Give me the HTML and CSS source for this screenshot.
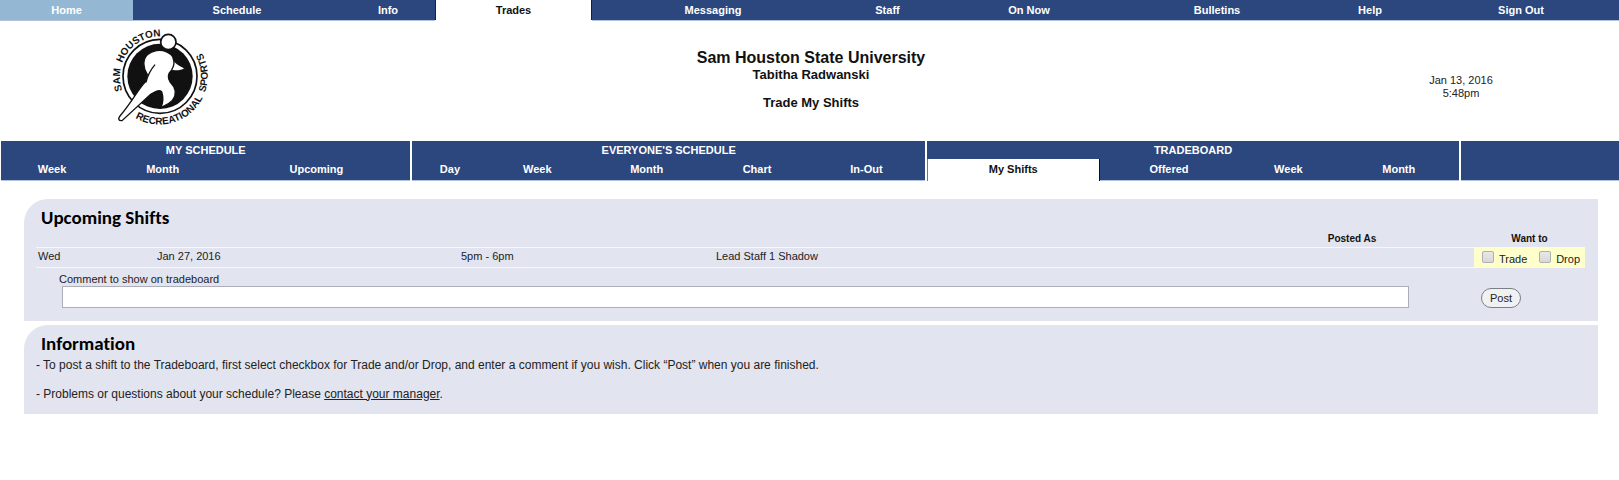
FILE: index.html
```html
<!DOCTYPE html>
<html lang="en">
<head>
<meta charset="utf-8">
<title>Trade My Shifts</title>
<link rel="stylesheet" href="styles.css">
</head>
<body>
<nav class="main-nav" aria-label="Main">
  <a class="home" href="#">Home</a>
  <a href="#">Schedule</a>
  <a href="#">Info</a>
  <a class="current" href="#" aria-current="page">Trades</a>
  <a href="#">Messaging</a>
  <a href="#">Staff</a>
  <a href="#">On Now</a>
  <a href="#">Bulletins</a>
  <a href="#">Help</a>
  <a href="#">Sign Out</a>
</nav>

<header class="banner">
  <svg class="logo" viewBox="0 0 345 330" role="img" aria-label="Sam Houston Recreational Sports">
    <defs>
      <path id="arc-top" d="M55 208A120 120 0 0 1 200 51"/>
      <path id="arc-bottom" d="M94 291A145 145 0 0 0 279 74"/>
    </defs>
    <circle cx="168" cy="166" r="111" fill="#fff" stroke="#111" stroke-width="5"/>
    <circle cx="168" cy="166" r="98" fill="#111"/>
    <path d="M130 161C116 140 116 115 130 101C145 88 170 84 186 92C198 97 207 104 208 114C215 130 233 136 245 142C235 151 214 152 203 147C192 158 190 171 199 184C217 202 218 222 205 238C194 250 187 252 171 259C178 243 178 227 173 212C165 205 153 212 140 220L54 299C43 300 42 293 48 285C87 240 105 200 124 183Z" fill="#fff" stroke="#111" stroke-width="4"/>
    <path d="M153 131C140 146 131 164 126 184" fill="none" stroke="#111" stroke-width="4"/>
    <path d="M203 146C210 135 213 126 208 113" fill="none" stroke="#111" stroke-width="4"/>
    <circle cx="193" cy="63" r="23" fill="#fff" stroke="#111" stroke-width="5"/>
    <text class="logo-text"><textPath href="#arc-top">SAM&#160;&#160;HOUSTON</textPath></text>
    <text class="logo-text"><textPath href="#arc-bottom">RECREATIONAL&#160;&#160;SPORTS</textPath></text>
  </svg>
  <div class="titles">
    <h1>Sam Houston State University</h1>
    <p class="person">Tabitha Radwanski</p>
    <h2>Trade My Shifts</h2>
  </div>
  <p class="clock">Jan 13, 2016<br>5:48pm</p>
</header>

<nav class="sub-nav" aria-label="Shifts">
  <section class="group">
    <h3>MY SCHEDULE</h3>
    <div class="links mine">
      <a href="#">Week</a><a href="#">Month</a><a href="#">Upcoming</a>
    </div>
  </section>
  <section class="group">
    <h3>EVERYONE'S SCHEDULE</h3>
    <div class="links everyone">
      <a href="#">Day</a><a href="#">Week</a><a href="#">Month</a><a href="#">Chart</a><a href="#">In-Out</a>
    </div>
  </section>
  <section class="group">
    <h3>TRADEBOARD</h3>
    <div class="links board">
      <a class="current" href="#" aria-current="page">My Shifts</a><a href="#">Offered</a><a href="#">Week</a><a href="#">Month</a>
    </div>
  </section>
  <div class="group"></div>
</nav>

<main>
  <section class="panel shifts">
    <h2>Upcoming Shifts</h2>
    <form>
      <table>
        <colgroup>
          <col class="col-day"><col class="col-date"><col class="col-time"><col class="col-role"><col class="col-posted"><col class="col-want">
        </colgroup>
        <thead>
          <tr><td></td><td></td><td></td><td></td><th scope="col">Posted As</th><th scope="col">Want to</th></tr>
        </thead>
        <tbody>
          <tr>
            <td>Wed</td><td>Jan 27, 2016</td><td>5pm - 6pm</td><td>Lead Staff 1 Shadow</td><td></td>
            <td class="want">
              <div class="options">
                <label><input type="checkbox"><span>Trade</span></label>
                <label><input type="checkbox"><span>Drop</span></label>
              </div>
            </td>
          </tr>
        </tbody>
      </table>
      <div class="comment">
        <div class="field">
          <label for="comment">Comment to show on tradeboard</label>
          <input type="text" id="comment">
        </div>
        <div class="action"><button type="button">Post</button></div>
      </div>
    </form>
  </section>

  <section class="panel info">
    <h2>Information</h2>
    <p>- To post a shift to the Tradeboard, first select checkbox for Trade and/or Drop, and enter a comment if you wish. Click “Post” when you are finished.</p>
    <p>- Problems or questions about your schedule? Please <a href="#">contact your manager</a>.</p>
  </section>
</main>
</body>
</html>
```

FILE: styles.css
```css
* {
  box-sizing: border-box;
}

body {
  margin: 0;
  background: #fff;
  color: #222;
  font: 11px/13px "Liberation Sans", Arial, sans-serif;
}

h1, h2, h3, p {
  margin: 0;
}

.main-nav {
  display: grid;
  grid-template-columns: 133fr 208fr 94fr 157fr 242fr 107fr 176fr 200fr 106fr 196fr;
}

.main-nav a,
.links a {
  color: #fff;
  font-weight: bold;
  text-align: center;
  text-decoration: none;
}

.main-nav a {
  border-bottom: 1px solid #b4c1dc;
  background: #2c477d;
  line-height: 20px;
}

.main-nav .home {
  background: #94b8d4;
}

.main-nav .current,
.links .current {
  background: #fff;
  color: #111;
}

.main-nav .current {
  border: solid #16203a;
  border-width: 0 1px;
  margin-bottom: 1px;
}

.banner {
  display: grid;
  grid-template-columns: 323fr 976fr 320fr;
  align-items: center;
  height: 120px;
  text-align: center;
}

.logo {
  width: 115px;
  justify-self: center;
  align-self: start;
}

.logo-text {
  fill: #111;
  font: bold 30px "Liberation Sans", Arial, sans-serif;
}

.titles {
  padding-bottom: 3px;
  color: #111;
  font-size: 13px;
  font-weight: bold;
  line-height: 16px;
}

.titles h1 {
  font-size: 16px;
  line-height: 18px;
}

.titles h2 {
  margin-top: 12px;
  font-size: 13px;
}

.clock {
  padding: 12px 0 0 4px;
}

.sub-nav {
  display: grid;
  grid-template-columns: 410fr 513fr 533fr 158fr;
  gap: 2px;
  padding-left: 1px;
}

.group {
  border-bottom: 1px solid #b4c1dc;
  background: #2c477d;
}

.group h3 {
  color: #fff;
  font-size: 11px;
  line-height: 18px;
  text-align: center;
}

.links {
  display: grid;
  line-height: 21px;
}

.mine {
  grid-template-columns: 102fr 119fr 188fr;
}

.everyone {
  grid-template-columns: 75fr 100fr 119fr 102fr 117fr;
}

.board {
  grid-template-columns: 173fr 139fr 100fr 121fr;
}

.links .current {
  margin-bottom: -1px;
  border: solid #111;
  border-width: 0 1px;
  border-left-color: #777;
}

main {
  display: grid;
  gap: 4px;
  padding: 18px 21px 20px 24px;
}

.panel {
  padding: 8px 13px 13px 12px;
  border-top-left-radius: 24px;
  background: #e2e4ef;
}

.panel h2 {
  padding-left: 5px;
  color: #000;
  font: bold 19px/22px Calibri, Carlito, Lato, sans-serif;
  font-variant-ligatures: none;
}

table {
  width: 100%;
  table-layout: fixed;
  border-collapse: collapse;
}

.col-day { width: 119px; }
.col-date { width: 304px; }
.col-time { width: 255px; }
.col-posted { width: 244px; }
.col-want { width: 111px; }

th,
td {
  padding: 0 2px;
  text-align: left;
}

th {
  height: 18px;
  padding: 2px 0 0;
  color: #111;
  font-size: 10px;
  text-align: center;
}

tbody td {
  height: 20px;
  padding-bottom: 2px;
  border: solid #f7f8fc;
  border-width: 1px 0;
}

tbody .want {
  padding: 0 5px 0 8px;
  border-color: #ffffcc;
  background: #ffffcc;
}

.options,
.options label {
  display: flex;
}

.options {
  justify-content: space-between;
}

.options label {
  gap: 5px;
}

.options span {
  padding-top: 4px;
}

.options input {
  width: 12px;
  height: 12px;
  margin: 2px 0 0;
  appearance: none;
  border: 1px solid #b0b0b0;
  border-radius: 2px;
  background: linear-gradient(#e8e8e8, #d8d8d8);
}

.comment {
  display: flex;
  align-items: flex-end;
  padding-top: 5px;
}

.field {
  display: grid;
  flex: 1;
  padding-left: 23px;
}

.field input {
  justify-self: end;
  width: calc(100% - 3px);
  height: 22px;
  margin: 0;
  padding: 2px 4px;
  border: 1px solid #adafb8;
  background: #fff;
  font: inherit;
}

.action {
  width: 176px;
  padding-left: 72px;
}

button {
  padding: 0 8px;
  border: 1px solid #7c7f86;
  border-radius: 10px;
  background: #f0f1f3;
  color: #222;
  font: 11px/18px "Liberation Sans", Arial, sans-serif;
}

.info {
  padding-bottom: 12px;
}

.info p {
  margin-top: 14px;
  font-size: 12px;
  line-height: 15px;
}

.info h2 + p {
  margin-top: 3px;
}

.info a {
  color: inherit;
}
```
